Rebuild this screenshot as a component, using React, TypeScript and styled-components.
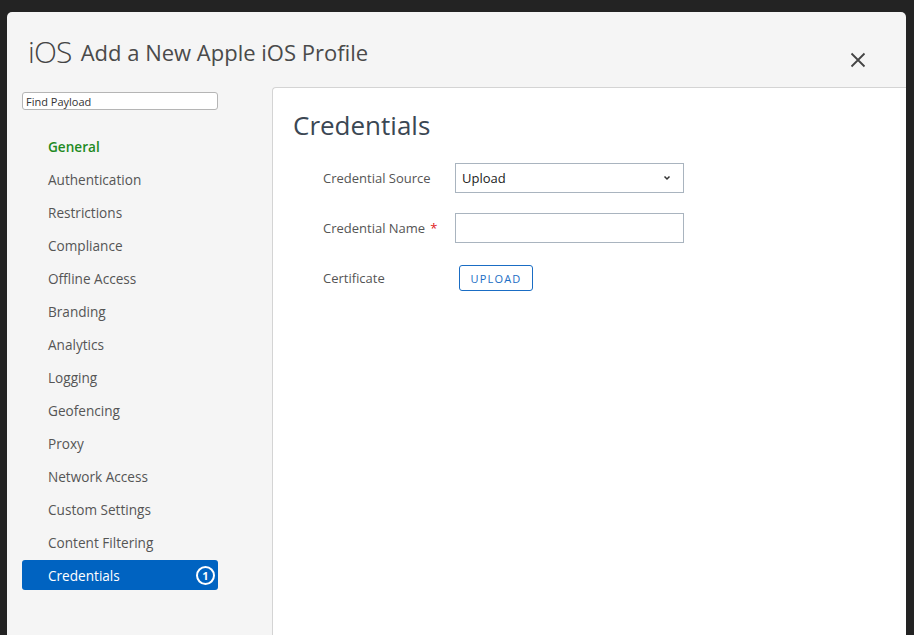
import React from "react";
import styled, { createGlobalStyle } from "styled-components";

const Global = createGlobalStyle`
  html, body { margin: 0; padding: 0; background: #232323; height: 100%; overflow: hidden; }
  body { font-family: "Open Sans", "Liberation Sans", sans-serif; }
  * { box-sizing: border-box; }
`;

const Page = styled.div`
  padding: 12px 8px 0 7px;
  height: 635px;
`;

const Modal = styled.div`
  background: #f5f5f5;
  border-radius: 5px 5px 0 0;
  height: 623px;
  display: flex;
  flex-direction: column;
  overflow: hidden;
`;

const Header = styled.div`
  height: 75px;
  display: flex;
  align-items: flex-start;
  padding: 24px 40px 0 21px;
`;

const Platform = styled.span`
  font-size: 30px;
  font-weight: 300;
  color: #444;
  letter-spacing: -0.8px;
  line-height: 32px;
  margin-right: 9px;
`;

const Title = styled.h1`
  margin: 0;
  font-size: 22px;
  font-weight: 400;
  color: #4a4a4a;
  line-height: 30px;
  margin-top: 1px;
  flex: 1;
`;

const Close = styled.button`
  border: none;
  background: transparent;
  padding: 0;
  margin-top: 16px;
  width: 16px;
  height: 16px;
  cursor: pointer;
  display: flex;
`;

const Body = styled.div`
  flex: 1;
  display: flex;
  min-height: 0;
`;

const Sidebar = styled.nav`
  width: 265px;
  padding: 5px 54px 0 15px;
  display: flex;
  flex-direction: column;
`;

const Search = styled.input`
  width: 196px;
  height: 18px;
  border: 1px solid #b5b5b5;
  border-radius: 3px;
  background: #fff;
  font-family: "Open Sans", "Liberation Sans", sans-serif;
  font-size: 11px;
  color: #333;
  padding: 0 3px;
  margin-bottom: 21px;
  outline: none;
  &::placeholder { color: #333; }
`;

const NavItem = styled.div<{ $active?: boolean; $current?: boolean }>`
  height: 30px;
  margin-bottom: 3px;
  padding: 0 12px 0 26px;
  display: flex;
  align-items: center;
  justify-content: space-between;
  font-size: 13.6px;
  border-radius: 3px;
  color: ${(p) => (p.$active ? "#ffffff" : p.$current ? "#1f8a1f" : "#555555")};
  background: ${(p) => (p.$active ? "#0063c1" : "transparent")};
  font-weight: ${(p) => (p.$current ? 600 : 400)};
`;

const Badge = styled.span`
  width: 19px;
  height: 19px;
  border: 2px solid #fff;
  border-radius: 50%;
  display: flex;
  align-items: center;
  justify-content: center;
  font-size: 11px;
  font-weight: 700;
  color: #fff;
  margin-right: -9px;
`;

const Panel = styled.section`
  flex: 1;
  background: #fff;
  border-top: 1px solid #d4d4d4;
  border-left: 1px solid #d4d4d4;
  border-top-left-radius: 4px;
  padding: 18px 20px 0 20px;
`;

const Heading = styled.h2`
  margin: 0 0 19px;
  font-size: 26px;
  font-weight: 400;
  color: #3b4753;
  line-height: 38px;
`;

const Form = styled.div`
  padding-left: 30px;
  display: flex;
  flex-direction: column;
  gap: 20px;
`;

const Row = styled.div`
  display: flex;
  align-items: center;
  height: 30px;
`;

const Label = styled.label`
  width: 132px;
  font-size: 13px;
  color: #555;
`;

const Req = styled.span`
  color: #e02020;
  margin-left: 5px;
`;

const SelectBox = styled.div`
  width: 229px;
  height: 30px;
  border: 1px solid #a9b4bf;
  display: flex;
  align-items: center;
  justify-content: space-between;
  padding: 0 12px 0 6px;
  font-size: 13px;
  color: #222;
`;

const TextInput = styled.input`
  width: 229px;
  height: 30px;
  border: 1px solid #a9b4bf;
  border-radius: 0;
  padding: 0 6px;
  font-size: 13px;
  outline: none;
`;

const UploadBtn = styled.button`
  margin-left: 4px;
  height: 26px;
  width: 74px;
  border: 1px solid #1a6dc4;
  border-radius: 3px;
  background: #fff;
  color: #1a6dc4;
  font-family: "Open Sans", "Liberation Sans", sans-serif;
  font-size: 11px;
  letter-spacing: 1.2px;
  padding: 0;
`;

const items = [
  "General",
  "Authentication",
  "Restrictions",
  "Compliance",
  "Offline Access",
  "Branding",
  "Analytics",
  "Logging",
  "Geofencing",
  "Proxy",
  "Network Access",
  "Custom Settings",
  "Content Filtering",
  "Credentials",
];

export default function App() {
  return (
    <>
      <Global />
      <Page>
        <Modal>
          <Header>
            <Platform>iOS</Platform>
            <Title>Add a New Apple iOS Profile</Title>
            <Close aria-label="Close">
              <svg width="16" height="16" viewBox="0 0 16 16">
                <path d="M1.5 1.5 L14.5 14.5 M14.5 1.5 L1.5 14.5" stroke="#444" strokeWidth="1.8" fill="none" />
              </svg>
            </Close>
          </Header>
          <Body>
            <Sidebar>
              <Search placeholder="Find Payload" />
              {items.map((it) => (
                <NavItem key={it} $current={it === "General"} $active={it === "Credentials"}>
                  <span>{it}</span>
                  {it === "Credentials" && <Badge>1</Badge>}
                </NavItem>
              ))}
            </Sidebar>
            <Panel>
              <Heading>Credentials</Heading>
              <Form>
                <Row>
                  <Label>Credential Source</Label>
                  <SelectBox>
                    <span>Upload</span>
                    <svg width="8" height="6" viewBox="0 0 8 6">
                      <path d="M1.5 1.5 L4 4 L6.5 1.5" stroke="#333" strokeWidth="1.5" fill="none" />
                    </svg>
                  </SelectBox>
                </Row>
                <Row>
                  <Label>
                    Credential Name<Req>*</Req>
                  </Label>
                  <TextInput />
                </Row>
                <Row>
                  <Label>Certificate</Label>
                  <UploadBtn>UPLOAD</UploadBtn>
                </Row>
              </Form>
            </Panel>
          </Body>
        </Modal>
      </Page>
    </>
  );
}
